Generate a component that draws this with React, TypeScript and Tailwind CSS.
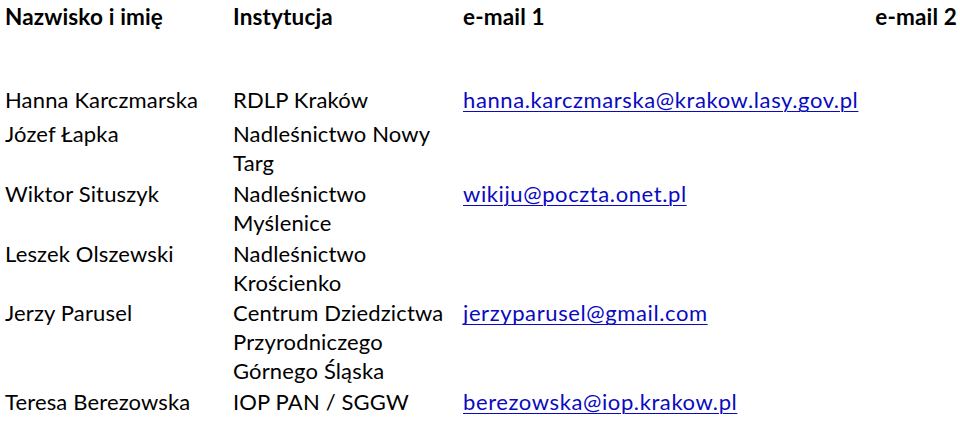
import React from "react";

type Row = { name: string; inst: string[]; email?: string };

const rows: Row[] = [
  { name: "Hanna Karczmarska", inst: ["RDLP Kraków"], email: "hanna.karczmarska@krakow.lasy.gov.pl" },
  { name: "Józef Łapka", inst: ["Nadleśnictwo Nowy", "Targ"] },
  { name: "Wiktor Situszyk", inst: ["Nadleśnictwo", "Myślenice"], email: "wikiju@poczta.onet.pl" },
  { name: "Leszek Olszewski", inst: ["Nadleśnictwo", "Krościenko"] },
  { name: "Jerzy Parusel", inst: ["Centrum Dziedzictwa", "Przyrodniczego", "Górnego Śląska"], email: "jerzyparusel@gmail.com" },
  { name: "Teresa Berezowska", inst: ["IOP PAN / SGGW"], email: "berezowska@iop.krakow.pl" },
];

export default function App() {
  return (
    <div
      className="w-[960px] h-[422px] overflow-hidden bg-white text-black"
      style={{ fontFamily: "Lato, 'Open Sans', sans-serif" }}
    >
      <div className="grid grid-cols-[228px_230px_1fr_auto] pl-[5px] pr-[3px] text-[22px] leading-[29px] tracking-[0.15px]">
        <div className="font-bold text-[22.5px] pt-[2px] pb-[54px]">Nazwisko i imię</div>
        <div className="font-bold text-[22.5px] pt-[2px] pb-[54px]">Instytucja</div>
        <div className="font-bold text-[22.5px] pt-[2px] pb-[54px]">e-mail 1</div>
        <div className="font-bold text-[22.5px] pt-[2px] pb-[54px] text-right">e-mail 2</div>
        {rows.map((r, i) => (
          <React.Fragment key={r.name}>
            <div className={i === 0 ? "pb-[5px]" : "pb-[1.8px]"}>{r.name}</div>
            <div className={i === 0 ? "pb-[5px]" : "pb-[1.8px]"}>
              {r.inst.map((l) => (
                <div key={l}>{l}</div>
              ))}
            </div>
            <div className={i === 0 ? "pb-[5px]" : "pb-[1.8px]"}>
              {r.email && (
                <a
                  href="#"
                  className="text-[#0a0ac0] underline underline-offset-[3px] decoration-1 tracking-[0.6px]"
                >
                  {r.email}
                </a>
              )}
            </div>
            <div />
          </React.Fragment>
        ))}
      </div>
    </div>
  );
}
